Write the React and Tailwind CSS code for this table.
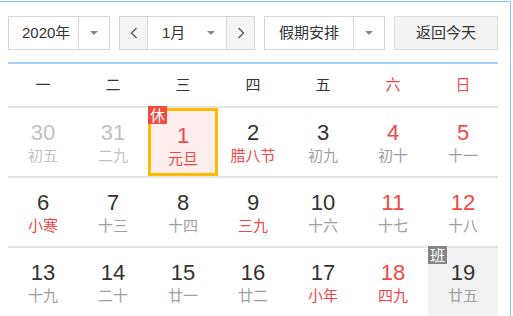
const rows = [
  [
    { d: 30, l: '初五', other: true },
    { d: 31, l: '二九', other: true },
    { d: 1, l: '元旦', red: true, lred: true, today: true, badge: '休' },
    { d: 2, l: '腊八节', lred: true },
    { d: 3, l: '初九' },
    { d: 4, l: '初十', red: true },
    { d: 5, l: '十一', red: true },
  ],
  [
    { d: 6, l: '小寒', lred: true },
    { d: 7, l: '十三' },
    { d: 8, l: '十四' },
    { d: 9, l: '三九', lred: true },
    { d: 10, l: '十六' },
    { d: 11, l: '十七', red: true },
    { d: 12, l: '十八', red: true },
  ],
  [
    { d: 13, l: '十九' },
    { d: 14, l: '二十' },
    { d: 15, l: '廿一' },
    { d: 16, l: '廿二' },
    { d: 17, l: '小年', lred: true },
    { d: 18, l: '四九', red: true, lred: true },
    { d: 19, l: '廿五', work: true, badge: '班' },
  ],
];

const weekdays = ['一', '二', '三', '四', '五', '六', '日'];

function Caret() {
  return <span className="block w-0 h-0 border-l-[4px] border-r-[4px] border-t-[4px] border-l-transparent border-r-transparent border-t-[#8a8a8a]" />;
}

function Chevron({ dir }) {
  return (
    <svg width="8" height="12" viewBox="0 0 8 12" fill="none" stroke="#555" strokeWidth="1.3">
      {dir === 'left' ? <polyline points="6.5,1 1.5,6 6.5,11" /> : <polyline points="1.5,1 6.5,6 1.5,11" />}
    </svg>
  );
}

function Cell({ c }) {
  let numColor = 'text-[#333]';
  if (c.other) numColor = 'text-[#c2c2c2]';
  else if (c.red) numColor = 'text-[#f04848]';
  let lunarColor = 'text-[#a0a0a0]';
  if (c.other) lunarColor = 'text-[#c2c2c2]';
  else if (c.lred) lunarColor = 'text-[#f04848]';

  return (
    <div
      className={
        'relative h-[68px] flex flex-col items-center pt-[12px] ' +
        (c.today ? 'bg-[#fdeded] border-[3px] border-[#ffbb00] pt-[9px] ' : '') +
        (c.work ? 'bg-[#f2f2f2] ' : '')
      }
    >
      {c.badge && (
        <span
          className={
            'absolute flex items-center justify-center w-[19px] h-[18px] text-[15px] leading-none text-white ' +
            (c.today ? 'left-[-3px] top-[-5px] bg-[#f24b3f]' : 'left-0 top-[-2px] bg-[#858585]')
          }
        >
          {c.badge}
        </span>
      )}
      <div className={'text-[22px] leading-[26px] ' + numColor}>{c.d}</div>
      <div className={'mt-[1px] text-[15px] leading-[18px] ' + lunarColor}>{c.l}</div>
    </div>
  );
}

export default function App() {
  return (
    <div
      className="w-[511px] h-[316px] overflow-hidden bg-white border-t border-r border-[#8cc2f7] mt-px"
      style={{ fontFamily: '"Liberation Sans", "Noto Sans CJK SC", sans-serif' }}
    >
      <div className="px-[8px] pt-[14px]">
        {/* toolbar */}
        <div className="flex items-center h-[34px] text-[15px] text-[#333]">
          <div className="flex h-full w-[102px] border border-[#d6d6d6] bg-white">
            <div className="flex items-center pl-[13px] w-[70px] border-r border-[#d6d6d6]">2020年</div>
            <div className="flex-1 flex items-center justify-center"><Caret /></div>
          </div>

          <div className="flex h-full ml-[9px] w-[136px] border border-[#d6d6d6]">
            <div className="flex items-center justify-center w-[28px] bg-[#f4f4f4] border-r border-[#d6d6d6]"><Chevron dir="left" /></div>
            <div className="flex items-center flex-1 bg-white pl-[14px] pr-[11px]">
              <span className="flex-1">1月</span>
              <Caret />
            </div>
            <div className="flex items-center justify-center w-[28px] bg-[#f4f4f4] border-l border-[#d6d6d6]"><Chevron dir="right" /></div>
          </div>

          <div className="flex h-full ml-[9px] w-[121px] border border-[#d6d6d6] bg-white">
            <div className="flex items-center pl-[14px] w-[89px] border-r border-[#d6d6d6]">假期安排</div>
            <div className="flex-1 flex items-center justify-center"><Caret /></div>
          </div>

          <div className="flex h-full items-center justify-center ml-[9px] w-[104px] border border-[#dcdcdc] bg-[#f3f3f3]">返回今天</div>
        </div>

        {/* calendar */}
        <div className="mt-[12px] w-[490px] border-t-2 border-[#a3cff8]">
          <div className="grid grid-cols-7 h-[42px] items-center text-[15px]">
            {weekdays.map((w, i) => (
              <div key={w} className={'text-center ' + (i >= 5 ? 'text-[#f04848]' : 'text-[#333]')}>{w}</div>
            ))}
          </div>
          {rows.map((r, i) => (
            <div key={i} className="grid grid-cols-7 border-t-2 border-[#e4e4e4]">
              {r.map((c) => <Cell key={c.d} c={c} />)}
            </div>
          ))}
        </div>
      </div>
    </div>
  );
}
